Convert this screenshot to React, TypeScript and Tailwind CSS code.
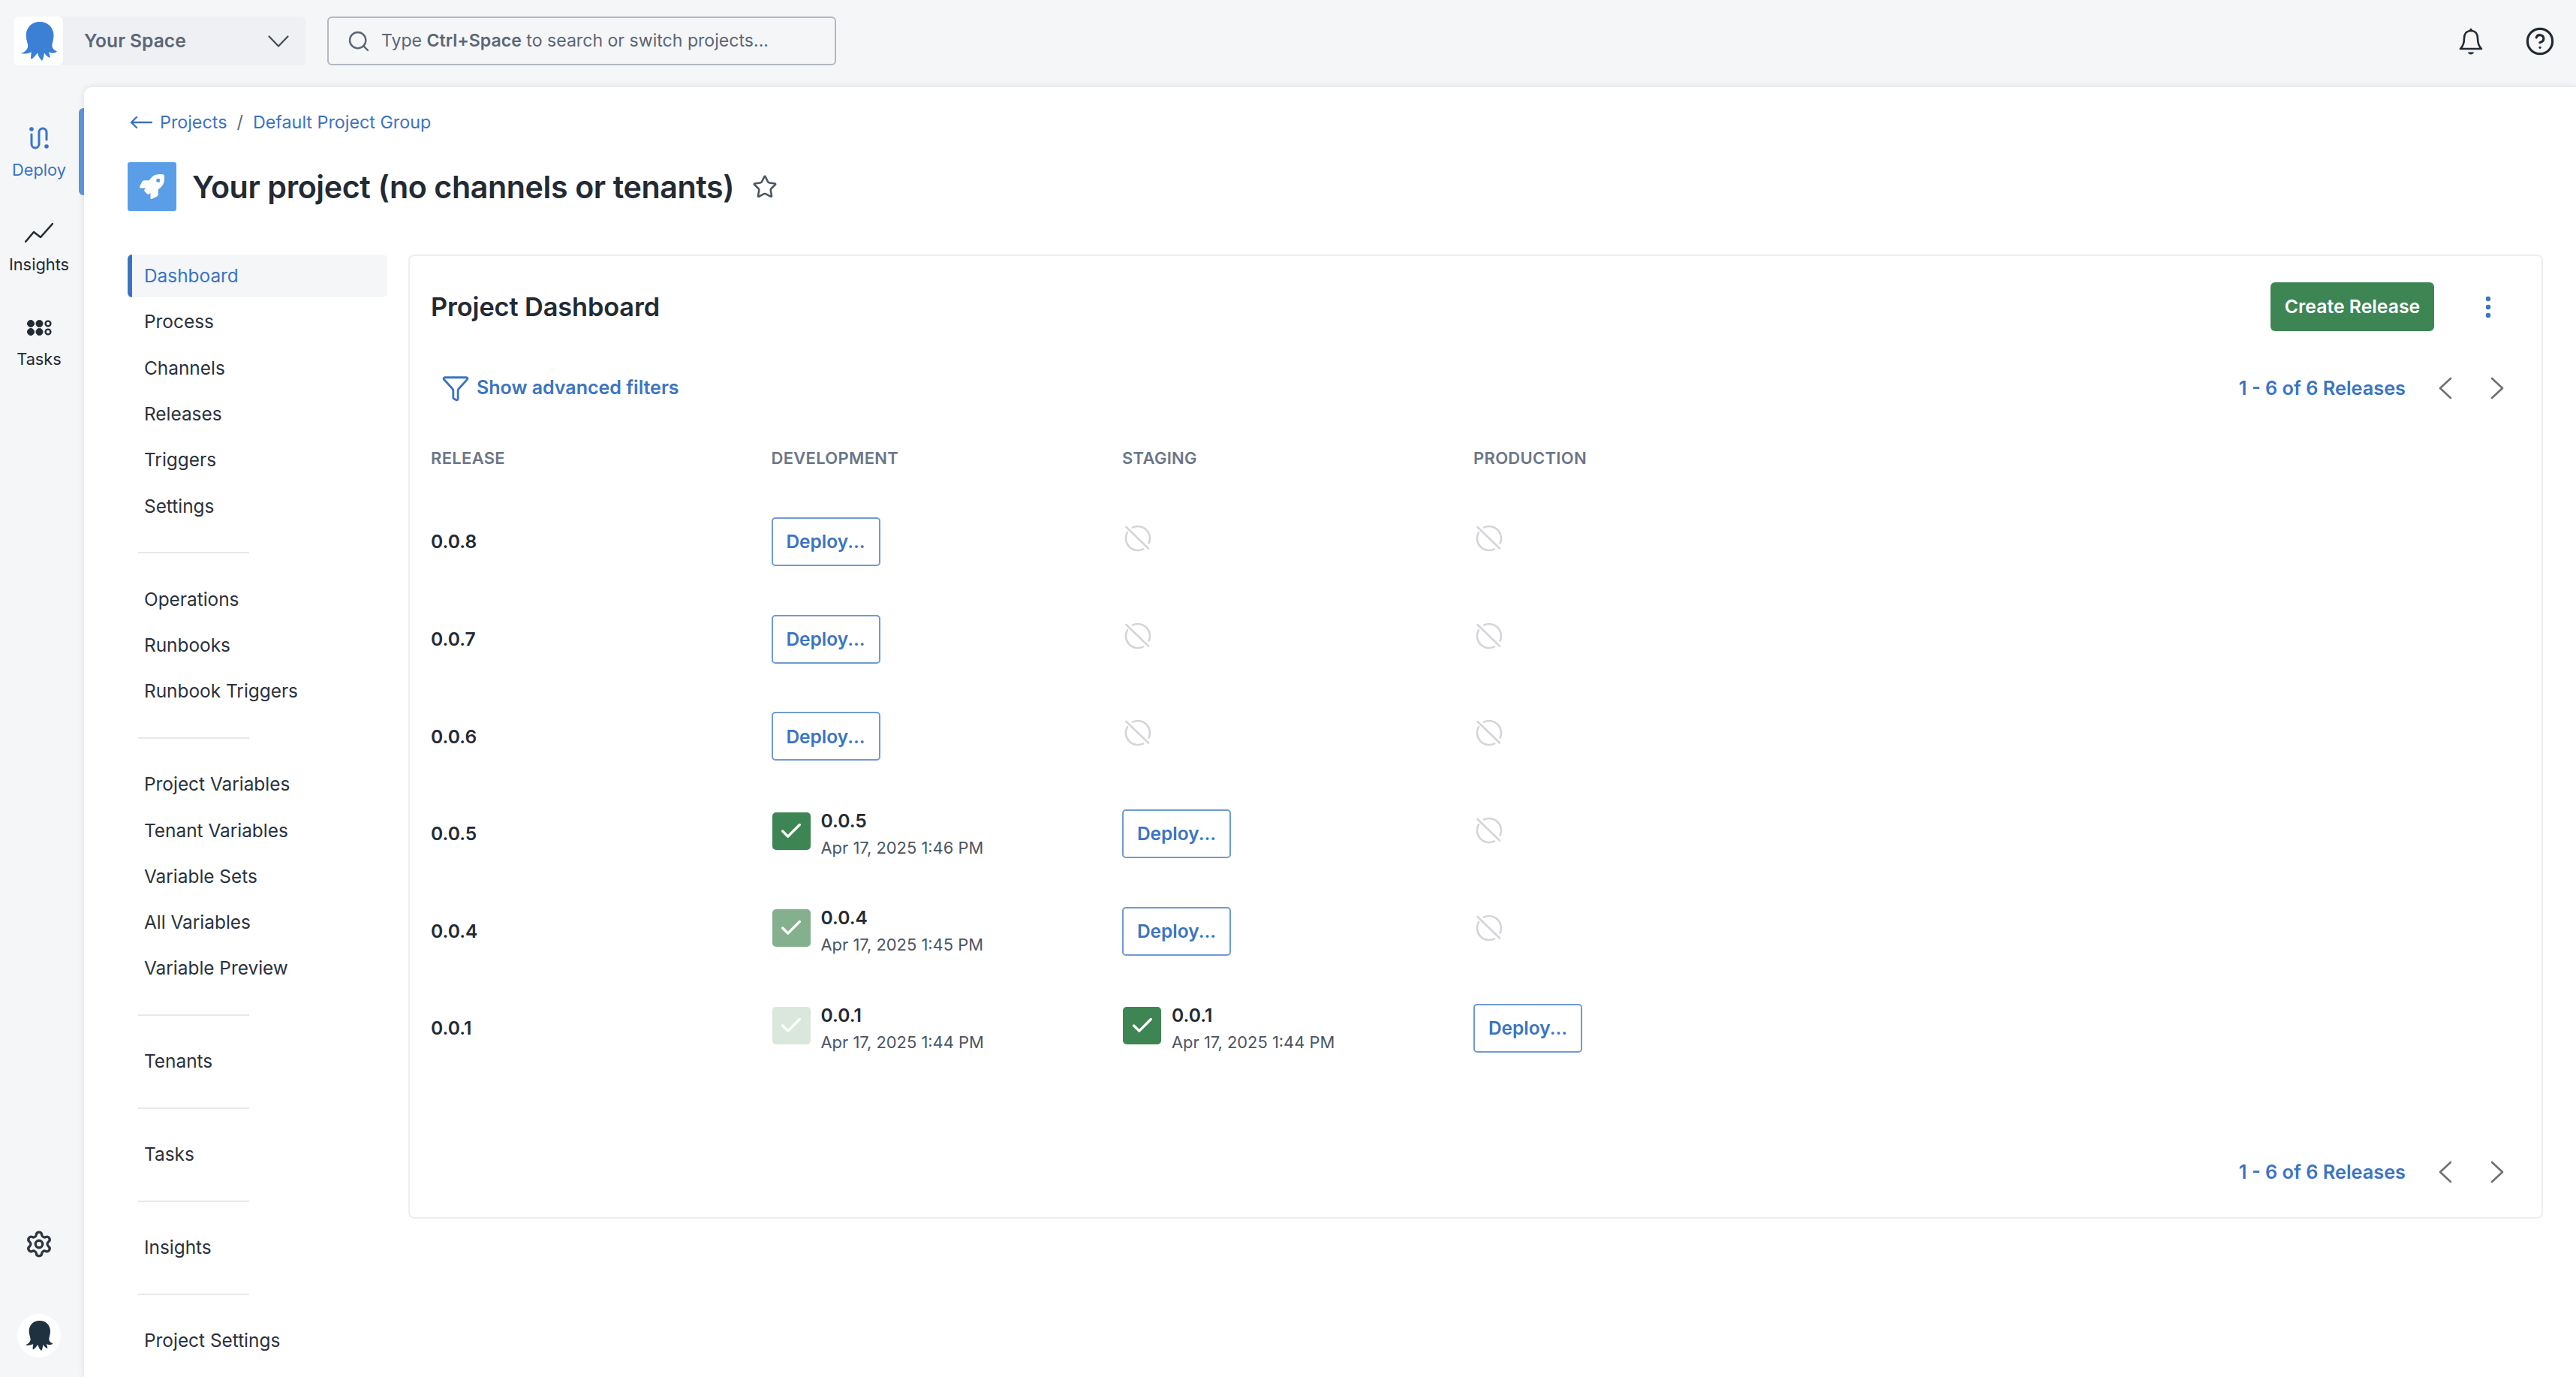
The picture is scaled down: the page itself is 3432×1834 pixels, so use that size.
import { Check, CircleHelp, Filter, Search, Settings, Star } from "lucide-react";
import { FaRocket } from "react-icons/fa";

function Octopus({ className }: { className: string }) {
  return (
    <svg viewBox="0 0 48 52" className={className} fill="currentColor">
      <path d="M25 0C36 0 43.5 8 43.5 18C43.5 25 41 29 41.5 33C42 36 44.5 38 48 39.5C45 42.5 39 42 37 40C37.5 43 39 45.5 38.5 48C35 47 32.5 43.5 31 41.5C30.5 45 30 49 28 52C24.5 49 23 45 22 41.5C20 44 17 48 13.5 50C12.5 47 13.5 43.5 14 40.5C10 42 4 43.5 0 42C4 41 7.5 38 9 34C10 30 6.7 25 6.7 18C6.7 8 14 0 25 0Z" />
    </svg>
  );
}

function Chevron({ dir }: { dir: "left" | "right" }) {
  return (
    <svg viewBox="0 0 18 30" className="h-[30px] w-[18px] text-[#6f7072]" fill="none" stroke="currentColor" strokeWidth="2.6" strokeLinecap="round" strokeLinejoin="round">
      {dir === "left" ? <polyline points="16,2 2,15 16,28" /> : <polyline points="2,2 16,15 2,28" />}
    </svg>
  );
}

function Pagination() {
  return (
    <div className="flex items-center">
      <span className="mr-[44px] text-[25.3px] font-semibold text-[#3b74c2]">1 - 6 of 6 Releases</span>
      <span className="mr-[51px] flex"><Chevron dir="left" /></span>
      <span className="mr-[50px] flex"><Chevron dir="right" /></span>
    </div>
  );
}

function RailItem({ label, active, children }: { label: string; active?: boolean; children: React.ReactNode }) {
  return (
    <div className={`relative flex h-[116px] w-[112px] flex-col items-center justify-center pr-[8px] ${active ? "text-[#3b74c2]" : "text-[#232a33]"}`}>
      <div className="flex h-[40px] items-center justify-center">{children}</div>
      <span className="mt-[8px] text-[21.8px] leading-[28px]">{label}</span>
      {active && <span className="absolute right-0 top-0 h-[116px] w-[7px] rounded-l-[6px] bg-[#5a94d8]" />}
    </div>
  );
}

const groups = [
  ["Dashboard", "Process", "Channels", "Releases", "Triggers", "Settings"],
  ["Operations", "Runbooks", "Runbook Triggers"],
  ["Project Variables", "Tenant Variables", "Variable Sets", "All Variables", "Variable Preview"],
  ["Tenants"],
  ["Tasks"],
  ["Insights"],
  ["Project Settings"],
];

function DeployButton() {
  return (
    <button className="flex h-[65px] w-[145px] items-center justify-center rounded-[5px] border-2 border-[#6f9bd1] bg-white text-[24.5px] font-semibold text-[#3b74c2]">
      Deploy...
    </button>
  );
}

function Blocked() {
  return (
    <svg viewBox="0 0 36 36" className="mb-[9px] ml-[3px] size-[36px] text-[#d3d5d8]" fill="none" stroke="currentColor" strokeWidth="2.6" strokeLinecap="round">
      <path d="M11 3.6A16 16 0 0 1 32.6 24.5" />
      <path d="M4 10.2A16 16 0 0 0 25 32.4" />
      <path d="M2.5 3L32 31.5" />
    </svg>
  );
}

function Done({ version, date, tile }: { version: string; date: string; tile: string }) {
  return (
    <div className="flex items-start gap-[14px]">
      <span className={`ml-[1px] mt-[5px] flex h-[50px] w-[51px] items-center justify-center rounded-[5px] ${tile}`}>
        <Check className="size-[34px] text-white" strokeWidth={2.4} />
      </span>
      <div className="flex flex-col">
        <span className="text-[24.6px] font-semibold leading-[32px] text-[#232a33]">{version}</span>
        <span className="mt-[4px] text-[21.9px] leading-[32px] text-[#4c5562]">{date}</span>
      </div>
    </div>
  );
}

const rows: { name: string; cells: React.ReactNode[] }[] = [
  { name: "0.0.8", cells: [<DeployButton />, <Blocked />, <Blocked />] },
  { name: "0.0.7", cells: [<DeployButton />, <Blocked />, <Blocked />] },
  { name: "0.0.6", cells: [<DeployButton />, <Blocked />, <Blocked />] },
  {
    name: "0.0.5",
    cells: [<Done version="0.0.5" date="Apr 17, 2025 1:46 PM" tile="bg-[#3e8554]" />, <DeployButton />, <Blocked />],
  },
  {
    name: "0.0.4",
    cells: [<Done version="0.0.4" date="Apr 17, 2025 1:45 PM" tile="bg-[#84b08e]" />, <DeployButton />, <Blocked />],
  },
  {
    name: "0.0.1",
    cells: [
      <Done version="0.0.1" date="Apr 17, 2025 1:44 PM" tile="bg-[#d9e7dd]" />,
      <Done version="0.0.1" date="Apr 17, 2025 1:44 PM" tile="bg-[#3e8554]" />,
      <DeployButton />,
    ],
  },
];

const gridCols = "grid grid-cols-[453.5px_467.5px_468px_1fr]";

export default function App() {
  return (
    <div className="flex h-screen w-full flex-col overflow-hidden bg-[#f4f6f8] font-['Inter',sans-serif] text-[#232a33]">
      <header className="flex h-[116px] shrink-0 items-center pb-[7px] pl-[19px] pr-[28px]">
        <div className="flex h-[65px] w-[388px] items-center rounded-[6px] bg-[#eef0f3]">
          <div className="flex h-[65px] w-[65px] items-center justify-center rounded-[6px] bg-white text-[#3b80d4]">
            <Octopus className="h-[52px] w-[48px]" />
          </div>
          <span className="ml-[28px] text-[24.6px] font-semibold text-[#5c6675]">Your Space</span>
          <svg viewBox="0 0 28 16" className="ml-auto mr-[22px] h-[16px] w-[28px] text-[#434c59]" fill="none" stroke="currentColor" strokeWidth="2.2" strokeLinecap="round" strokeLinejoin="round">
            <polyline points="1.5,1.5 14,14.5 26.5,1.5" />
          </svg>
        </div>
        <div className="ml-[29px] flex h-[65px] w-[678px] items-center rounded-[6px] border-2 border-[#b2b8c2] pl-[24px] text-[#5c6675]">
          <Search className="size-[32px]" strokeWidth={1.8} />
          <span className="ml-[14px] text-[23.1px]">
            Type <b className="font-semibold">Ctrl+Space</b> to search or switch projects...
          </span>
        </div>
        <div className="ml-auto flex items-center gap-[56px]">
          <svg viewBox="0 0 32 36" className="h-[36px] w-[32px] text-[#232a33]" fill="none" stroke="currentColor" strokeWidth="2.6" strokeLinecap="round" strokeLinejoin="round">
            <path d="M16 4C9.5 4 7 9 7 14C7 21 5 25 2 28H30C27 25 25 21 25 14C25 9 22.5 4 16 4Z" />
            <circle cx="16" cy="2.4" r="1.6" fill="currentColor" stroke="none" />
            <path d="M12 32.4H20C19.5 34.6 17.8 35.4 16 35.4C14.2 35.4 12.5 34.6 12 32.4Z" fill="currentColor" stroke="none" />
          </svg>
          <CircleHelp className="size-[40px] text-[#232a33]" strokeWidth={1.9} />
        </div>
      </header>

      <div className="flex min-h-0 flex-1">
        <aside className="flex w-[112px] shrink-0 flex-col items-center pt-[28px]">
          <RailItem label="Deploy" active>
            <svg viewBox="0 0 26 30" className="h-[30px] w-[26px]" fill="none" stroke="currentColor" strokeWidth="3" strokeLinecap="round">
              <circle cx="3" cy="3" r="2.8" fill="currentColor" stroke="none" />
              <path d="M3 10V23A5 5 0 0 0 13 23V7A5 5 0 0 1 23 7V17" />
              <circle cx="23" cy="26" r="2.8" fill="currentColor" stroke="none" />
            </svg>
          </RailItem>
          <div className="mt-[10px]">
            <RailItem label="Insights">
              <svg viewBox="0 0 38 26" className="h-[26px] w-[38px]" fill="none" stroke="currentColor" strokeWidth="2.6" strokeLinecap="round" strokeLinejoin="round">
                <polyline points="1,25 12,12 21,19 37,1" />
              </svg>
            </RailItem>
          </div>
          <div className="mt-[10px]">
            <RailItem label="Tasks">
              <svg viewBox="0 0 33 21" className="h-[21px] w-[33px]" fill="currentColor" stroke="currentColor">
                <circle cx="5" cy="5" r="4.5" />
                <circle cx="16.5" cy="5" r="4.5" />
                <circle cx="28" cy="5" r="3.4" fill="none" strokeWidth="2.4" />
                <circle cx="5" cy="16" r="4.5" />
                <circle cx="16.5" cy="16" r="4.5" />
                <circle cx="28" cy="16" r="3.4" fill="none" strokeWidth="2.4" />
              </svg>
            </RailItem>
          </div>
          <div className="mb-[26px] mt-auto flex flex-col items-center gap-[74px] pr-[9px]">
            <Settings className="size-[38px] text-[#30363f]" strokeWidth={2.1} />
            <div className="flex size-[58px] items-center justify-center rounded-full bg-white text-[#1f303f]">
              <Octopus className="h-[40px] w-[38px]" />
            </div>
          </div>
        </aside>

        <main className="min-w-0 flex-1 rounded-tl-[10px] bg-white pl-[58px] pr-[44px] pt-[26px] shadow-[0_0_8px_rgba(40,50,70,0.12)]">
          <div className="flex h-[42px] items-center text-[23.3px] text-[#3b74c2]">
            <svg viewBox="0 0 30 18" className="ml-[3px] h-[18px] w-[30px]" fill="none" stroke="currentColor" strokeWidth="2.4" strokeLinecap="round" strokeLinejoin="round">
              <path d="M29 9H2M9 2L2 9L9 16" />
            </svg>
            <span className="ml-[10px]">Projects</span>
            <span className="mx-[13px] text-[#5c6675]">/</span>
            <span>Default Project Group</span>
          </div>
          <div className="mt-[32px] flex h-[65px] items-center">
            <div className="flex size-[65px] items-center justify-center rounded-[3px] bg-[#5a9ee8] text-white">
              <FaRocket className="size-[33px]" />
            </div>
            <h1 className="ml-[21px] mt-[2px] text-[41.2px] font-semibold leading-none tracking-[-0.4px] text-[#232a33]">
              Your project (no channels or tenants)
            </h1>
            <Star className="ml-[24px] size-[34px] text-[#4c5562]" strokeWidth={1.8} />
          </div>

          <div className="mt-[58px] flex items-start gap-[28px]">
            <nav className="flex w-[346px] shrink-0 flex-col">
              {groups.map((g, i) => (
                <div key={i} className="flex flex-col">
                  {i > 0 && <hr className="my-[32.5px] ml-[14px] w-[148px] border-t-2 border-[#e6e8eb]" />}
                  <div className="flex flex-col gap-[4.3px]">
                    {g.map((item) => (
                      <div
                        key={item}
                        className={
                          item === "Dashboard"
                            ? "flex h-[57px] items-center rounded-[6px] border-l-[6px] border-[#3b74c2] bg-[#f4f6f8] pl-[16px] text-[24.4px] text-[#3b74c2]"
                            : "flex h-[57px] items-center rounded-[6px] pl-[22px] text-[24.4px] text-[#2a313b]"
                        }
                      >
                        {item}
                      </div>
                    ))}
                  </div>
                </div>
              ))}
            </nav>

            <section className="min-w-0 flex-1 rounded-[8px] border-2 border-[#eceef0] pb-[27px] pl-[28px] pt-[35px]">
              <div className="flex h-[65px] items-center">
                <h2 className="text-[34.3px] font-semibold tracking-[-0.1px] text-[#232a33]">Project Dashboard</h2>
                <button className="ml-auto flex h-[65px] w-[218px] items-center justify-center rounded-[6px] bg-[#3e8554] text-[24.8px] font-semibold text-white">
                  Create Release
                </button>
                <svg viewBox="0 0 8 30" className="ml-[68px] mr-[67px] h-[30px] w-[8px] text-[#3b74c2]" fill="currentColor">
                  <circle cx="4" cy="4" r="3.2" />
                  <circle cx="4" cy="15" r="3.2" />
                  <circle cx="4" cy="26" r="3.2" />
                </svg>
              </div>
              <div className="mt-[43px] flex h-[65px] items-center justify-between">
                <div className="ml-[14px] flex items-center text-[#3b74c2]">
                  <Filter className="size-[38px]" strokeWidth={1.8} />
                  <span className="ml-[9px] text-[25px] font-semibold">Show advanced filters</span>
                </div>
                <Pagination />
              </div>
              <div className={`${gridCols} mb-[25px] mt-[39px] h-[44px] items-center text-[22px] font-semibold uppercase tracking-[0.3px] text-[#6b7688]`}>
                <span>Release</span>
                <span>Development</span>
                <span>Staging</span>
                <span>Production</span>
              </div>
              <div className="flex flex-col">
                {rows.map((r) => (
                  <div key={r.name} className={`${gridCols} h-[129.6px] items-center`}>
                    <span className="text-[24.6px] font-semibold text-[#232a33]">{r.name}</span>
                    {r.cells.map((c, i) => (
                      <div key={i} className="flex items-center">{c}</div>
                    ))}
                  </div>
                ))}
              </div>
              <div className="mt-[94px] flex h-[65px] items-center justify-end">
                <Pagination />
              </div>
            </section>
          </div>
        </main>
      </div>
    </div>
  );
}
